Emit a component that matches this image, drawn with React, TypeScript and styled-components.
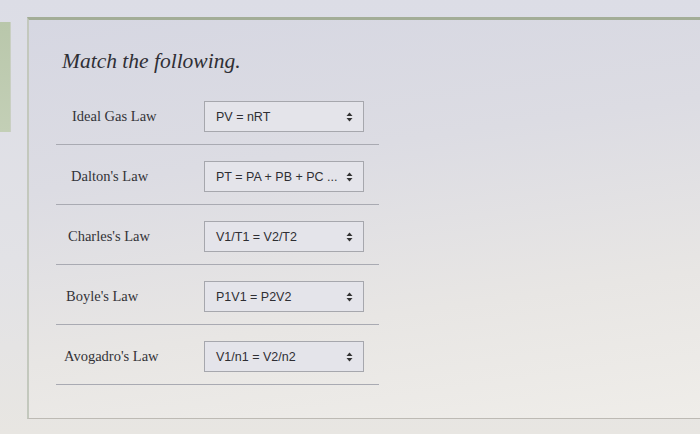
import React, { FC, ReactElement } from 'react';
import styled, { createGlobalStyle } from 'styled-components';

const GlobalStyle = createGlobalStyle`
  html, body {
    margin: 0;
    padding: 0;
    background: linear-gradient(180deg, #dcdde6 0%, #e2e2e6 60%, #e8e6e2 100%);
  }
`;

const Page = styled.div`
  width: 700px;
  height: 434px;
  overflow: hidden;
  display: flex;
  align-items: flex-start;
  padding-top: 17px;
  box-sizing: border-box;
`;

const SideStrip = styled.div`
  width: 10px;
  height: 110px;
  margin-top: 5px;
  background: linear-gradient(180deg, #b9c7ab 0%, #c3cfb6 100%);
  border-right: 1px solid #c9cfc2;
`;

const Card = styled.div`
  margin-left: 16px;
  flex: 1;
  height: 402px;
  box-sizing: border-box;
  border-top: 3px solid #a3ad97;
  border-left: 2px solid #c3c8bd;
  border-bottom: 1px solid #bdbab4;
  background: linear-gradient(172deg, #d6d7e2 0%, #dcdce3 35%, #e8e6e4 70%, #efede9 100%);
  padding: 28px 0 0 0;
`;

const Title = styled.h2`
  margin: 0 0 0 33px;
  font-family: "Liberation Serif", "DejaVu Serif", serif;
  font-style: italic;
  font-weight: normal;
  font-size: 21.5px;
  line-height: 26px;
  color: #2f2f35;
`;

const List = styled.div`
  margin: 11px 0 0 27px;
  width: 323px;
`;

const Row = styled.div`
  display: flex;
  align-items: center;
  height: 60px;
  padding-top: 4px;
  box-sizing: border-box;
  border-bottom: 1px solid #a9aab2;
`;

const Label = styled.div<{ indent: number }>`
  width: ${p => 148 - p.indent}px;
  padding-left: ${p => p.indent}px;
  font-family: "Liberation Serif", "DejaVu Serif", serif;
  font-size: 14.5px;
  color: #333338;
`;

const Select = styled.div`
  width: 160px;
  height: 31px;
  box-sizing: border-box;
  border: 1px solid #a6a7ad;
  background: #e4e4ea;
  display: flex;
  align-items: center;
  justify-content: space-between;
  padding: 0 10px 0 11px;
  font-family: "Liberation Sans", Arial, sans-serif;
  font-size: 12.5px;
  color: #2e2e33;
`;

const Arrows: FC = () => (
  <svg width="7" height="10" viewBox="0 0 7 10">
    <path d="M3.5 0.5 L6.5 4 L0.5 4 Z" fill="#333" />
    <path d="M3.5 9.5 L6.5 6 L0.5 6 Z" fill="#333" />
  </svg>
);

const rows = [
  { law: 'Ideal Gas Law', answer: 'PV = nRT', indent: 16 },
  { law: "Dalton's Law", answer: 'PT = PA + PB + PC ...', indent: 15 },
  { law: "Charles's Law", answer: 'V1/T1 = V2/T2', indent: 12 },
  { law: "Boyle's Law", answer: 'P1V1 = P2V2', indent: 10 },
  { law: "Avogadro's Law", answer: 'V1/n1 = V2/n2', indent: 8 },
];

const App: FC = (): ReactElement => (
  <>
    <GlobalStyle />
    <Page>
      <SideStrip />
      <Card>
        <Title>Match the following.</Title>
        <List>
          {rows.map(r => (
            <Row key={r.law}>
              <Label indent={r.indent}>{r.law}</Label>
              <Select>
                <span>{r.answer}</span>
                <Arrows />
              </Select>
            </Row>
          ))}
        </List>
      </Card>
    </Page>
  </>
);

export default App;
